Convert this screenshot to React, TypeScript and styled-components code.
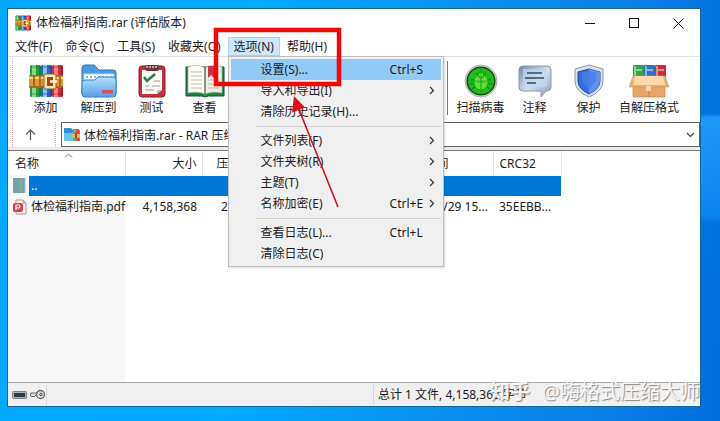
import React from "react";
import styled, { createGlobalStyle } from "styled-components";

const GlobalStyle = createGlobalStyle`
  * { box-sizing: border-box; }
  body { margin: 0; }
  body, button, input {
    font-family: "Noto Sans", "Noto Sans CJK SC", sans-serif;
    font-size: 12px;
    line-height: 16px;
    color: #1c1c1c;
  }
  button { background: none; border: 0; padding: 0; }
  svg { display: block; }
`;

const Desktop = styled.div`
  position: relative;
  display: flex;
  min-height: 100vh;
  padding: 9px 20px 15px 8px;
  overflow: hidden;
  background:
    linear-gradient(180deg, transparent 27%, rgba(40, 165, 255, 0.75) 28%, rgba(20, 145, 255, 0.6) 51%, transparent 53%) right / 19px 100% no-repeat,
    linear-gradient(95deg, #00a9fb 0%, #00aaff 35%, #0b93f2 60%, #0a7fe6 85%, #006fdc 100%);
`;

const Window = styled.main`
  flex: 1;
  min-width: 0;
  display: flex;
  flex-direction: column;
  background: #fff;
  box-shadow: 0 0 0 1px #17649c;
`;

const TitleBar = styled.header`
  display: flex;
  align-items: center;
  height: 28px;
  padding-left: 7px;
  gap: 5px;
`;

const Title = styled.h1`
  flex: 1;
  margin: 0;
  font-size: 12px;
  font-weight: 400;
  white-space: nowrap;
`;

const CaptionButtons = styled.div`
  display: flex;
`;

const CaptionButton = styled.button`
  display: grid;
  place-items: center;
  width: 44px;
  height: 28px;
`;

const MenuBar = styled.nav`
  display: flex;
  gap: 1px;
  height: 20px;
  padding-left: 1px;
  border-bottom: 1px solid #e3e3e3;
`;

const MenuAnchor = styled.div`
  position: relative;
`;

const MenuButton = styled.button<{ $open?: boolean }>`
  height: 19px;
  padding: 0 6px;
  white-space: nowrap;
  background: ${(p) => (p.$open ? "#cce8ff" : "transparent")};
  box-shadow: ${(p) => (p.$open ? "inset 0 0 0 1px #a5d3f5" : "none")};
`;

const Popup = styled.div`
  position: absolute;
  z-index: 2;
  top: 19px;
  left: 0;
  width: 216px;
  padding: 2px;
  background: #f0f0f0;
  border: 1px solid #bdbdbd;
  box-shadow: 1px 1px 2px rgba(0, 0, 0, 0.15);
`;

const PopupItem = styled.button<{ $active?: boolean }>`
  display: grid;
  grid-template-columns: 1fr 39px 12px;
  align-items: center;
  width: 100%;
  height: 21px;
  padding: 0 0 0 30px;
  text-align: left;
  white-space: nowrap;
  background: ${(p) => (p.$active ? "#91c9f7" : "transparent")};
`;

const PopupRule = styled.hr`
  height: 8px;
  margin: 0 0 0 25px;
  border: 0;
  background: linear-gradient(#d0d0d0, #d0d0d0) center / 100% 1px no-repeat;
`;

const ToolBar = styled.div`
  display: flex;
  height: 65px;
  padding: 2px 0;
`;

const Grip = styled.span`
  flex: none;
  width: 1px;
  margin-left: 4px;
  border-left: 1px dotted #dba5a5;
`;

const ToolGroup = styled.div<{ $gap?: number }>`
  display: flex;
  gap: ${(p) => p.$gap ?? 0}px;
  padding: 5px 0 0 6px;
`;

const ToolSpace = styled.div`
  flex: 0 1 216px;
`;

const ToolRule = styled.span`
  width: 1px;
  height: 54px;
  margin-top: 2px;
  background: #777;
`;

const ToolButton = styled.button<{ $wide?: boolean }>`
  display: flex;
  flex-direction: column;
  align-items: center;
  gap: 2px;
  min-width: 53px;
  padding: 0 1px;
  margin-left: ${(p) => (p.$wide ? "2px" : "0")};
  white-space: nowrap;
`;

const AddressRow = styled.div`
  display: flex;
  height: 25px;
`;

const UpButton = styled.button`
  display: grid;
  place-items: center;
  width: 34px;
  margin-right: 4px;
`;

const AddressBox = styled.div`
  flex: 1;
  display: flex;
  align-items: center;
  margin-left: 5px;
  padding-left: 2px;
  border: 1px solid #606060;
  background: #fff;
`;

const AddressInput = styled.input`
  flex: 1;
  min-width: 0;
  height: 20px;
  padding: 0;
  margin-left: 4px;
  border: 0;
  background: transparent;
`;

const DropButton = styled.button`
  display: grid;
  place-items: center;
  width: 17px;
`;

const ListArea = styled.section`
  flex: 1;
  margin-top: 3px;
  border-top: 1px solid #7a7a7a;
  background: linear-gradient(90deg, #f8f8f8 117px, #fff 117px) 0 24px no-repeat;
  box-shadow: 0 -3px 0 #ececec;
`;

const FileTable = styled.table`
  width: 553px;
  table-layout: fixed;
  border-collapse: collapse;
`;

const HeadCell = styled.th<{ $align?: string; $pad?: number }>`
  position: relative;
  height: 24px;
  padding: 2px 5px 0 ${(p) => p.$pad ?? 7}px;
  font-weight: 400;
  text-align: ${(p) => p.$align ?? "left"};
  border-right: 1px solid #e2e2e2;
  background: #fff;
`;

const SortMark = styled.svg`
  position: absolute;
  top: 2px;
  left: 56px;
`;

const Cell = styled.td<{ $align?: string; $pad?: number }>`
  height: 21px;
  padding: 0 5px 0 ${(p) => p.$pad ?? 6}px;
  text-align: ${(p) => p.$align ?? "left"};
  white-space: nowrap;
`;

const NameCell = styled(Cell)`
  padding: 0;
`;

const FileName = styled.div<{ $selected?: boolean }>`
  display: grid;
  grid-template-columns: 21px 1fr;
  align-items: center;
  height: 21px;

  & > span {
    padding-left: 2px;
    line-height: 20px;
    color: ${(p) => (p.$selected ? "#fff" : "#1c1c1c")};
    background: ${(p) => (p.$selected ? "#0078d7" : "transparent")};
  }
  & > svg { margin-left: 5px; }
`;

const SelectedFill = styled.td`
  padding: 0;
  background: linear-gradient(#0078d7, #0078d7) center / 100% 20px no-repeat;
`;

const StatusBar = styled.footer`
  display: flex;
  align-items: center;
  height: 24px;
  background: #f0f0f0;
  border-top: 1px solid #a8a8a8;
`;

const StatusIcons = styled.div`
  display: flex;
  align-items: center;
  gap: 3px;
  width: 39px;
  height: 20px;
  padding-left: 4px;
  border-right: 1px solid #d7d7d7;
`;

const StatusPane = styled.div<{ $last?: boolean }>`
  flex: 1 1 0;
  height: 20px;
  padding: 2px 4px;
  white-space: nowrap;
  border-right: ${(p) => (p.$last ? "0" : "1px solid #d7d7d7")};
`;

const Markup = styled.svg`
  position: absolute;
  z-index: 3;
  top: 0;
  left: 0;
  pointer-events: none;
`;

const Watermark = styled.div`
  position: absolute;
  z-index: 3;
  right: 20px;
  bottom: 15px;
  display: flex;
  gap: 12px;
  font-size: 20px;
  line-height: 28px;
  color: rgba(255, 255, 255, 0.92);
  text-shadow: 1px 1px 1px rgba(90, 90, 90, 0.7);
  white-space: nowrap;
  pointer-events: none;

  & > b { font-weight: 700; }
`;

const Books = ({ size }: { size: number }) => (
  <svg width={size} height={size} viewBox="0 0 34 34">
    {[
      ["#2a9a45", "#7ddc80", "#1b7a36"],
      ["#2a68c4", "#86c0f4", "#1c4f9c"],
      ["#d02b3e", "#f5868a", "#a01c2e"],
    ].map(([base, light, dark], i) => (
      <g key={base} transform={`translate(${1 + i * 11} 0)`}>
        <rect y="1" width="11" height="32" rx="1.5" fill={base} />
        <rect x="2" y="1" width="4" height="32" fill={light} />
        <rect x="9" y="2" width="2" height="30" fill={dark} />
        <path d="M0 3h11M0 30h11" stroke={dark} strokeWidth="1" opacity=".6" />
      </g>
    ))}
    <rect y="11" width="34" height="13" rx="1" fill="#a8651c" />
    <rect y="12" width="34" height="10" fill="#dd9a30" />
    <path d="M0 14h34" stroke="#f9d682" strokeWidth="2" />
    <path d="M5 12v10M11 12v10M31 12v10" stroke="#96581a" strokeWidth="1.5" />
    <rect x="15" y="10" width="12" height="15" rx="1" fill="#fbe6b8" stroke="#92581b" />
    <rect x="18" y="13" width="6" height="9" fill="#9c4a1a" />
    <path d="M21 17.5h7" stroke="#fff0c8" strokeWidth="2.5" />
  </svg>
);

const FolderIcon = () => (
  <svg width="36" height="34" viewBox="0 0 36 34">
    <defs>
      <linearGradient id="folder" x1="0" y1="0" x2="0" y2="1">
        <stop offset="0" stopColor="#b5e0ff" />
        <stop offset="1" stopColor="#559fe8" />
      </linearGradient>
    </defs>
    <path d="M1 30V4q0-3 3-3h9l5 5h14q3 0 3 3v21z" fill="#4b9ae2" stroke="#2d75bd" />
    <path d="M3 10h30v12H3z" fill="#f4fbff" stroke="#b6d8f2" />
    <path d="M5 13h26" stroke="#87b9e0" strokeWidth="2" strokeDasharray="2 2" />
    <path d="M1 19q0-3 3-3h10l3-3h15q3 0 3 3v14q0 3-3 3H4q-3 0-3-3z" fill="url(#folder)" stroke="#3480c8" />
    <rect x="21" y="26" width="11" height="3.5" rx="1" fill="#d84e59" />
  </svg>
);

const ClipboardIcon = () => (
  <svg width="28" height="34" viewBox="0 0 28 34">
    <rect x="1" y="2" width="26" height="31" rx="3" fill="#c82e3b" stroke="#8f1926" />
    <path d="M4 6h20v20l-5 4H4z" fill="#fbfaf8" />
    <path d="M24 26l-5 4v-4z" fill="#c8b8b6" />
    <rect x="7" y="1" width="14" height="6" rx="2" fill="#6d3439" />
    <path d="M8 3h12" stroke="#dfc6c6" strokeWidth="1.5" strokeDasharray="2 1" />
    <path d="M6 13l3 4 8-7" fill="none" stroke="#247e46" strokeWidth="2.5" />
    <path d="M16 17h6M7 22h4M14 22h8M7 26h9" stroke="#999" />
  </svg>
);

const BookIcon = () => (
  <svg width="40" height="34" viewBox="0 0 40 34">
    <path d="M1 3h38v29H23l-3 1-3-1H1z" fill="#218246" stroke="#0c5527" />
    <path d="M3 3q10-4 17 1v26q-7-3-17-1z" fill="#fbfaf4" stroke="#a5a99d" strokeWidth=".6" />
    <path d="M37 3q-10-4-17 1v26q7-3 17-1z" fill="#eeeee4" stroke="#a5a99d" strokeWidth=".6" />
    <path d="M20 4v28" stroke="#6f7d6f" strokeWidth="1.5" />
    <path d="M6 8h11M6 12h11M6 16h11M6 20h11M6 24h11M23 16h11M23 20h11M23 24h11" stroke="#bdbdb5" />
    <path d="M23 2h6v12l-3-3-3 3z" fill="#c93442" />
  </svg>
);

const VirusIcon = () => (
  <svg width="34" height="34" viewBox="0 0 34 34">
    <circle cx="17" cy="17" r="16" fill="#d4d7d4" stroke="#aeb4ae" />
    <circle cx="17" cy="17" r="13.8" fill="#20bd19" stroke="#164e16" strokeWidth="1.6" />
    <path d="M12 9l3 4M22 9l-3 4M7 15l6 2M27 15l-6 2M8 25l5-4M26 25l-5-4M4 20h9M30 20h-9" stroke="#108610" strokeWidth="1.2" />
    <ellipse cx="17" cy="18" rx="7" ry="8" fill="#5ee03a" stroke="#22a81f" />
    <circle cx="17" cy="11" r="3" fill="#4fd62f" stroke="#1c981c" />
    <path d="M17 14v11M12 18h10" stroke="#2fb528" />
    <path d="M17 3v28M3 17h28" stroke="#0a830e" strokeWidth=".6" opacity=".6" />
  </svg>
);

const CommentIcon = () => (
  <svg width="34" height="34" viewBox="0 0 34 34">
    <defs>
      <linearGradient id="comment" x1="0" y1="0" x2="1" y2="1">
        <stop stopColor="#7088ac" />
        <stop offset=".5" stopColor="#d3e0f0" />
        <stop offset="1" stopColor="#8a9fbe" />
      </linearGradient>
    </defs>
    <path d="M5 2h24q4 0 4 4v17q0 4-4 4h-1l-5 6v-6H5q-4 0-4-4V6q0-4 4-4z" fill="url(#comment)" stroke="#8998ac" />
    <path d="M5 5h24v18H5z" fill="#c5d8ee" opacity=".7" />
    <path d="M9 9h15M7 14h19M9 19h9" stroke="#344963" strokeWidth="1.5" />
  </svg>
);

const ShieldIcon = () => (
  <svg width="32" height="34" viewBox="0 0 32 34">
    <path d="M16 1l14 4v12q0 10-14 16Q2 27 2 17V5z" fill="#dce3ea" stroke="#8b98a9" />
    <path d="M16 5l11 3v9q0 8-11 13Q5 25 5 17V8z" fill="#336fda" stroke="#22479c" />
    <path d="M16 5l11 3v9q0 8-11 13z" fill="#5e91f5" />
    <path d="M9 9l7-2 7 2v8l-7 9-7-9z" fill="#477fe9" opacity=".8" />
  </svg>
);

const SfxIcon = () => (
  <svg width="40" height="34" viewBox="0 0 40 34">
    {[["#31a544", "#83dc8b"], ["#326fc0", "#80b8ed"], ["#cb2e3b", "#f18a86"]].map(([c, light], i) => (
      <g key={c} transform={`translate(${4 + i * 11} 0)`}>
        <rect y="1" width="11" height="16" rx="1" fill={c} />
        <path d="M2 2v13" stroke={light} strokeWidth="2" />
        <path d="M3 6h6" stroke="#edf2f6" strokeWidth="1.5" opacity=".7" />
      </g>
    ))}
    <path d="M4 14h32v19H4z" fill="#e9a568" stroke="#b97840" strokeWidth=".6" />
    <path d="M4 12h32l4 11H0z" fill="#eab070" stroke="#cb9359" strokeWidth=".6" />
    <path d="M6 12h28l2 9H4z" fill="#fbd9a8" />
    <path d="M20 22v11" stroke="#be7b45" />
    <path d="M17 22h5v5h-5z" fill="#f8d5a2" />
  </svg>
);

const ArchiveFolder = () => (
  <svg width="16" height="15" viewBox="0 0 16 15">
    <path d="M0 1h7l2 2h7v11H0z" fill="#378ed5" />
    <path d="M0 6h9v8H0z" fill="#69c4ef" />
    <path d="M9 2h3v12H9z" fill="#65ae58" />
    <path d="M12 2h3v12h-3z" fill="#d44b49" />
    <path d="M8 7h8v4H8z" fill="#e4b64c" />
    <path d="M11 6h2v5h-2z" fill="#8e5729" />
  </svg>
);

const PdfIcon = () => (
  <svg width="14" height="16" viewBox="0 0 14 16">
    <path d="M3 1h7l3 3v11H3z" fill="#fff" stroke="#b98a8a" />
    <path d="M10 1v3h3" fill="none" stroke="#b98a8a" />
    <rect y="4" width="10" height="9" rx="2" fill="#d64245" />
    <path d="M3 11V6h3q2 1 0 3H3" fill="none" stroke="#fff" strokeWidth="1.2" />
  </svg>
);

const UpFolder = () => (
  <svg width="13" height="15" viewBox="0 0 13 15">
    <path d="M0 0h12v15H0z" fill="#74a3a8" />
    <path d="M8 1v13" stroke="#80ae9a" strokeWidth="3" />
    <path d="M12 0v15" stroke="#a6bdc4" />
  </svg>
);

const Chevron = () => (
  <svg width="6" height="9" viewBox="0 0 6 9" fill="none" stroke="#333" strokeWidth="1.2">
    <path d="M1 1l3.5 3.5L1 8" />
  </svg>
);

type Entry = { label: string; keys?: string; sub?: boolean; active?: boolean };

const optionGroups: Entry[][] = [
  [
    { label: "设置(S)...", keys: "Ctrl+S", active: true },
    { label: "导入和导出(I)", sub: true },
    { label: "清除历史记录(H)..." },
  ],
  [
    { label: "文件列表(F)", sub: true },
    { label: "文件夹树(R)", sub: true },
    { label: "主题(T)", sub: true },
    { label: "名称加密(E)", keys: "Ctrl+E", sub: true },
  ],
  [{ label: "查看日志(L)...", keys: "Ctrl+L" }, { label: "清除日志(C)" }],
];

const leftTools = [
  { label: "添加", icon: <Books size={34} /> },
  { label: "解压到", icon: <FolderIcon /> },
  { label: "测试", icon: <ClipboardIcon /> },
  { label: "查看", icon: <BookIcon /> },
];

const rightTools = [
  { label: "扫描病毒", icon: <VirusIcon /> },
  { label: "注释", icon: <CommentIcon /> },
  { label: "保护", icon: <ShieldIcon /> },
  { label: "自解压格式", icon: <SfxIcon />, wide: true },
];

const OptionsMenu = () => (
  <Popup role="menu">
    {optionGroups.map((group, i) => (
      <React.Fragment key={i}>
        {i > 0 && <PopupRule />}
        {group.map((e) => (
          <PopupItem key={e.label} role="menuitem" $active={e.active}>
            <span>{e.label}</span>
            <span>{e.keys}</span>
            {e.sub && <Chevron />}
          </PopupItem>
        ))}
      </React.Fragment>
    ))}
  </Popup>
);

export default function App() {
  return (
    <Desktop>
      <GlobalStyle />
      <Window>
        <TitleBar>
          <Books size={16} />
          <Title>体检福利指南.rar (评估版本)</Title>
          <CaptionButtons>
            <CaptionButton aria-label="最小化">
              <svg width="11" height="11" stroke="#111"><path d="M0 5.5h10" /></svg>
            </CaptionButton>
            <CaptionButton aria-label="最大化">
              <svg width="11" height="11" fill="none" stroke="#111"><rect x=".5" y=".5" width="9" height="9" /></svg>
            </CaptionButton>
            <CaptionButton aria-label="关闭">
              <svg width="11" height="11" fill="none" stroke="#111"><path d="M.5.5l10 10M10.5.5l-10 10" /></svg>
            </CaptionButton>
          </CaptionButtons>
        </TitleBar>
        <MenuBar>
          {["文件(F)", "命令(C)", "工具(S)", "收藏夹(O)"].map((m) => (
            <MenuButton key={m}>{m}</MenuButton>
          ))}
          <MenuAnchor>
            <MenuButton $open aria-expanded="true">选项(N)</MenuButton>
            <OptionsMenu />
          </MenuAnchor>
          <MenuButton>帮助(H)</MenuButton>
        </MenuBar>
        <ToolBar>
          <Grip />
          <ToolGroup>
            {leftTools.map((t) => (
              <ToolButton key={t.label}>{t.icon}{t.label}</ToolButton>
            ))}
          </ToolGroup>
          <ToolSpace />
          <ToolRule />
          <ToolGroup $gap={1}>
            {rightTools.map((t) => (
              <ToolButton key={t.label} $wide={t.wide}>{t.icon}{t.label}</ToolButton>
            ))}
          </ToolGroup>
        </ToolBar>
        <AddressRow>
          <Grip />
          <UpButton aria-label="向上">
            <svg width="11" height="12" fill="none" stroke="#666" strokeWidth="1.3">
              <path d="M5.5 11V1M1 5.5L5.5 1 10 5.5" />
            </svg>
          </UpButton>
          <Grip />
          <AddressBox>
            <ArchiveFolder />
            <AddressInput aria-label="地址" readOnly value="体检福利指南.rar - RAR 压缩" />
            <DropButton aria-label="展开">
              <svg width="9" height="6" fill="none" stroke="#444" strokeWidth="1.2"><path d="M1 1l3.5 3.5L8 1" /></svg>
            </DropButton>
          </AddressBox>
        </AddressRow>
        <ListArea>
          <FileTable>
            <colgroup>
              <col width="117" /><col width="77" /><col width="227" /><col width="64" /><col width="68" />
            </colgroup>
            <thead>
              <tr>
                <HeadCell>
                  名称
                  <SortMark width="9" height="5" fill="none" stroke="#777"><path d="M1 4.5l3.5-3.5L8 4.5" /></SortMark>
                </HeadCell>
                <HeadCell $align="right">大小</HeadCell>
                <HeadCell $pad={14}>压</HeadCell>
                <HeadCell>间</HeadCell>
                <HeadCell $pad={6}>CRC32</HeadCell>
              </tr>
            </thead>
            <tbody>
              <tr>
                <NameCell>
                  <FileName $selected><UpFolder /><span>..</span></FileName>
                </NameCell>
                <SelectedFill colSpan={4} />
              </tr>
              <tr>
                <NameCell>
                  <FileName><PdfIcon /><span>体检福利指南.pdf</span></FileName>
                </NameCell>
                <Cell $align="right">4,158,368</Cell>
                <Cell $pad={19}>2</Cell>
                <Cell $align="right">/29 15...</Cell>
                <Cell>35EEBB...</Cell>
              </tr>
            </tbody>
          </FileTable>
        </ListArea>
        <StatusBar>
          <StatusIcons>
            <svg width="15" height="8">
              <rect x=".5" y=".5" width="14" height="7" rx="1" fill="#a9b8c1" stroke="#71808a" />
              <rect x="2" y="2" width="11" height="4" fill="#303b43" />
            </svg>
            <svg width="16" height="11" fill="none">
              <path d="M7 4H1l-1 2 2 2 1-1 1 1 2-2h2" fill="#ddd" stroke="#666" />
              <circle cx="10.5" cy="5.5" r="4" fill="#e2e2e2" stroke="#666" strokeWidth="1.3" />
              <circle cx="11" cy="5.5" r="1.3" stroke="#444" />
            </svg>
          </StatusIcons>
          <StatusPane />
          <StatusPane $last>总计 1 文件, 4,158,368 字节</StatusPane>
        </StatusBar>
      </Window>
      <Markup width="345" height="215">
        <rect x="216" y="30" width="123" height="54" fill="none" stroke="#ee0a0a" strokeWidth="4.5" />
        <path d="M338 207L298 107" stroke="#cf1520" strokeWidth="1.6" />
        <path d="M294 96l11 11.5-13 5z" fill="#dd1019" />
      </Markup>
      <Watermark><b>知乎</b><span>@嗨格式压缩大师</span></Watermark>
    </Desktop>
  );
}
